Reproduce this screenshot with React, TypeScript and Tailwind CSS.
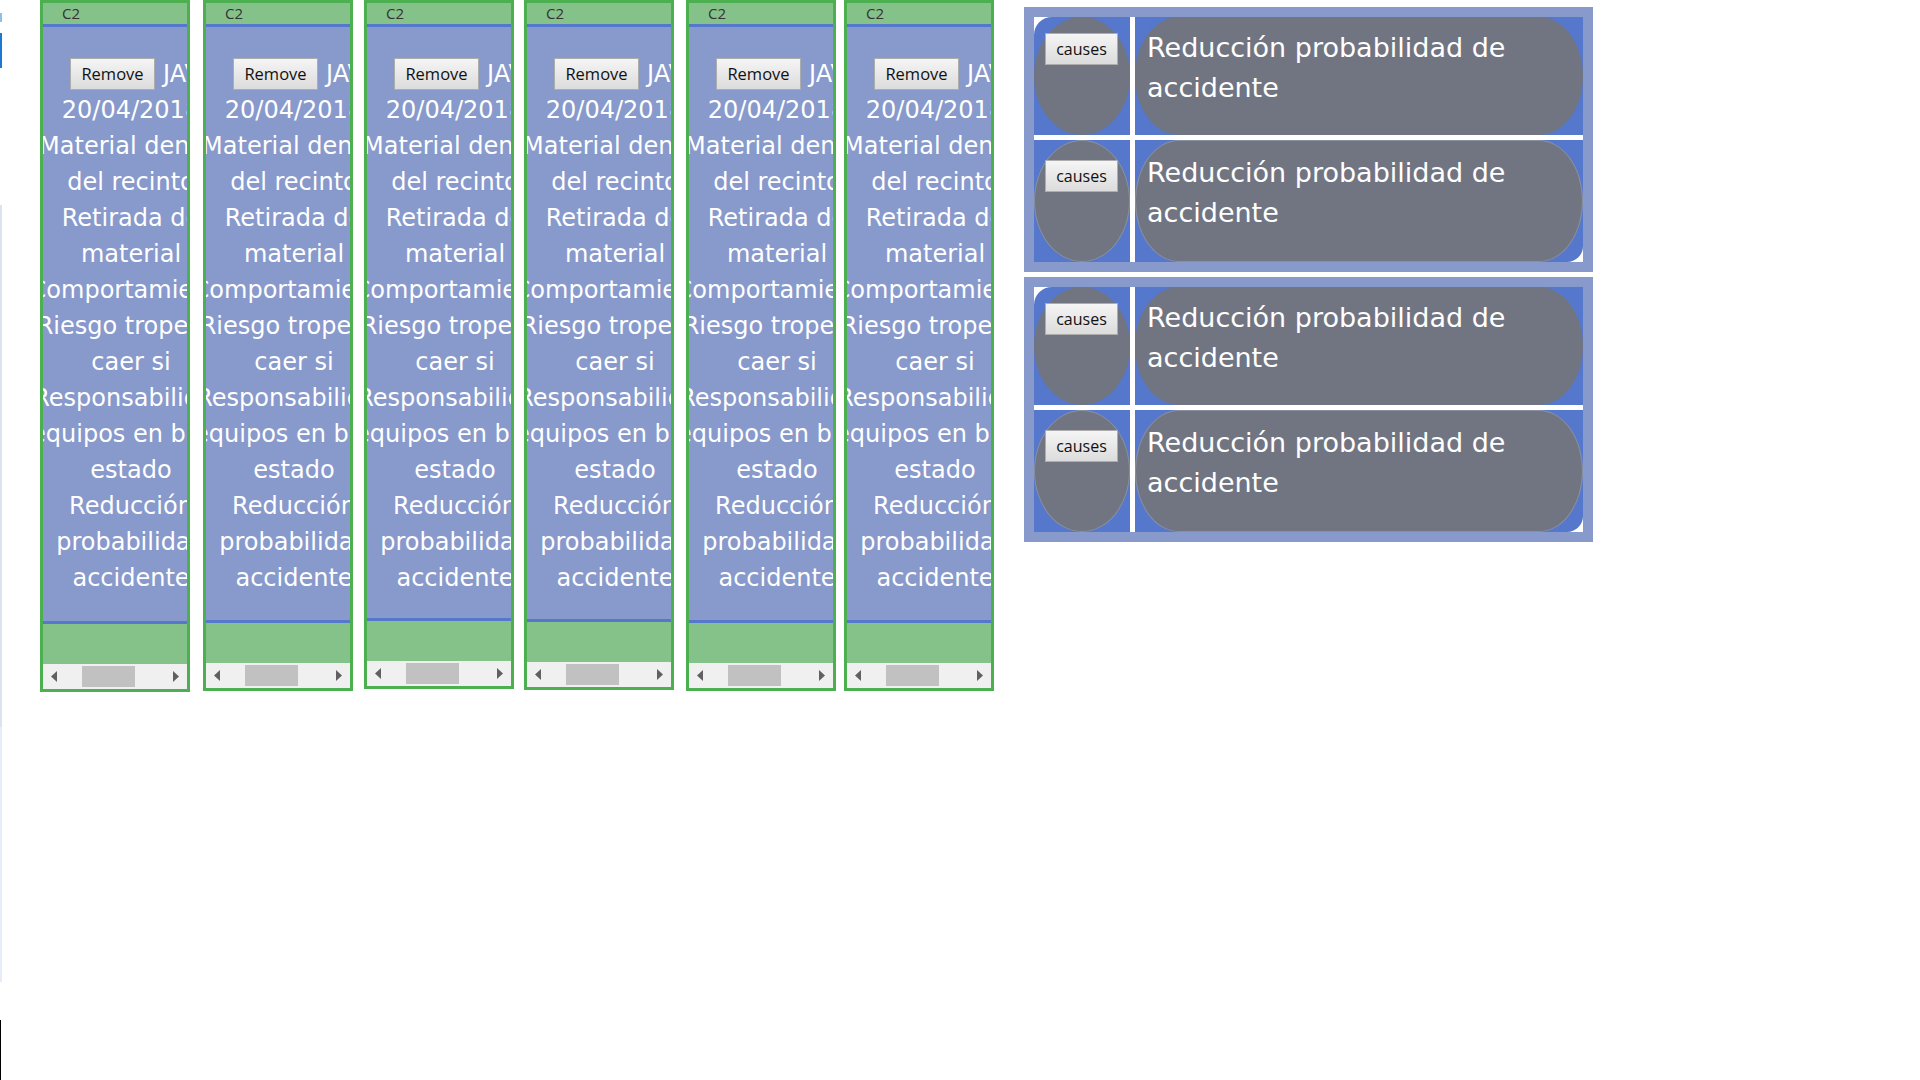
import React from "react";

const LINES = [
  "20/04/2018",
  "Material dentro",
  "del recinto",
  "Retirada de",
  "material",
  "Comportamiento",
  "Riesgo tropezar",
  "caer si",
  "Responsabilidad",
  "equipos en buen",
  "estado",
  "Reducción",
  "probabilidad",
  "accidente",
];

const COLS = [
  { ml: "ml-[38px]", h: "h-[692px]" },
  { ml: "ml-[13px]", h: "h-[691px]" },
  { ml: "ml-[11px]", h: "h-[689px]" },
  { ml: "ml-[10px]", h: "h-[690px]" },
  { ml: "ml-[12px]", h: "h-[691px]" },
  { ml: "ml-[8px]", h: "h-[691px]" },
];

function Arrow({ dir }: { dir: "left" | "right" }) {
  return (
    <svg width="6" height="11" viewBox="0 0 6 11" className="shrink-0">
      {dir === "left" ? (
        <polygon points="6,0 6,11 0,5.5" fill="#606060" />
      ) : (
        <polygon points="0,0 0,11 6,5.5" fill="#606060" />
      )}
    </svg>
  );
}

function Column({ ml, h }: { ml: string; h: string }) {
  return (
    <div className={`${ml} ${h} w-[150px] shrink-0 border-[3px] border-[#4cb050] flex flex-col`}>
      <div className="h-[21px] shrink-0 bg-[#85c28a] pl-[19px] text-[15px] leading-[21px] text-[#333333] font-['Open_Sans',sans-serif]">
        C2
      </div>
      <div className="h-[3px] shrink-0 bg-[#5577cc]" />
      <div className="flex-1 min-h-0 bg-[#8899cc] overflow-hidden pt-[31px] font-['DejaVu_Sans',sans-serif] text-white">
        <div className="flex items-center gap-[8px] pl-[27px] h-[32px] whitespace-nowrap">
          <button className="shrink-0 w-[85px] h-[32px] border border-[#adadad] bg-linear-to-b from-[#f5f5f5] to-[#dcdcdc] text-[16.5px] text-[#111111] font-['Open_Sans',sans-serif] leading-none">
            Remove
          </button>
          <span className="text-[24px] leading-[32px]">JAVIER</span>
        </div>
        <div className="w-[176px] mt-[2px] flex flex-col items-center">
          {LINES.map((l, i) => (
            <div key={i} className="whitespace-nowrap text-[24px] leading-[36px]">
              {l}
            </div>
          ))}
        </div>
      </div>
      <div className="h-[3px] shrink-0 bg-[#5577cc]" />
      <div className="h-[40px] shrink-0 bg-[#85c28a]" />
      <div className="h-[25px] shrink-0 bg-[#f0f0f0] flex items-center pl-[8px]">
        <Arrow dir="left" />
        <div className="ml-[25px] w-[53px] h-[21px] bg-[#c1c1c1]" />
        <div className="ml-[38px]">
          <Arrow dir="right" />
        </div>
      </div>
    </div>
  );
}

function CausesButton() {
  return (
    <button className="w-[73px] h-[32px] border border-[#adadad] bg-linear-to-b from-[#f5f5f5] to-[#dcdcdc] text-[16px] text-[#111111] font-['Open_Sans',sans-serif] leading-none">
      causes
    </button>
  );
}

function CauseBox() {
  return (
    <div className="w-[569px] p-[10px] bg-[#8899cc]">
      <div className="bg-white grid grid-cols-[96px_448px] grid-rows-[118px_122px] gap-[5px]">
        <div className="bg-[#5577cc] rounded-tl-[18px]">
          <div className="w-full h-full rounded-[50%] bg-[#717582] pt-[16px] pl-[11px]">
            <CausesButton />
          </div>
        </div>
        <div className="bg-[#5577cc]">
          <div className="w-full h-full rounded-[44px/59px] bg-[#717582] pl-[12px] pt-[11px] text-white text-[27px] leading-[40px] font-['DejaVu_Sans',sans-serif]">
            <div>Reducción probabilidad de</div>
            <div>accidente</div>
          </div>
        </div>
        <div className="bg-[#5577cc]">
          <div className="w-full h-full rounded-[50%] bg-[#717582] border border-[#8a90a0] pt-[19px] pl-[10px]">
            <CausesButton />
          </div>
        </div>
        <div className="bg-[#5577cc] rounded-br-[16px]">
          <div className="w-full h-full rounded-[44px/61px] bg-[#717582] border border-[#8a90a0] pl-[11px] pt-[12px] text-white text-[27px] leading-[40px] font-['DejaVu_Sans',sans-serif]">
            <div>Reducción probabilidad de</div>
            <div>accidente</div>
          </div>
        </div>
      </div>
    </div>
  );
}

export default function App() {
  return (
    <div className="w-[1920px] h-[1080px] bg-white flex items-start overflow-hidden">
      <div className="w-[2px] h-[1080px] shrink-0 flex flex-col">
        <div className="h-[13px] bg-white" />
        <div className="h-[9px] bg-[#8fc0ea]" />
        <div className="h-[11px] bg-white" />
        <div className="h-[35px] bg-[#1e78d2]" />
        <div className="h-[137px] bg-white" />
        <div className="h-[522px] bg-[#dbe3ef]" />
        <div className="h-[255px] bg-[#e7edf6]" />
        <div className="h-[38px] bg-white" />
        <div className="flex-1 flex">
          <div className="w-[1px] bg-black" />
        </div>
      </div>
      {COLS.map((c, i) => (
        <Column key={i} ml={c.ml} h={c.h} />
      ))}
      <div className="ml-[30px] mt-[7px] flex flex-col gap-[5px] shrink-0">
        <CauseBox />
        <CauseBox />
      </div>
    </div>
  );
}
